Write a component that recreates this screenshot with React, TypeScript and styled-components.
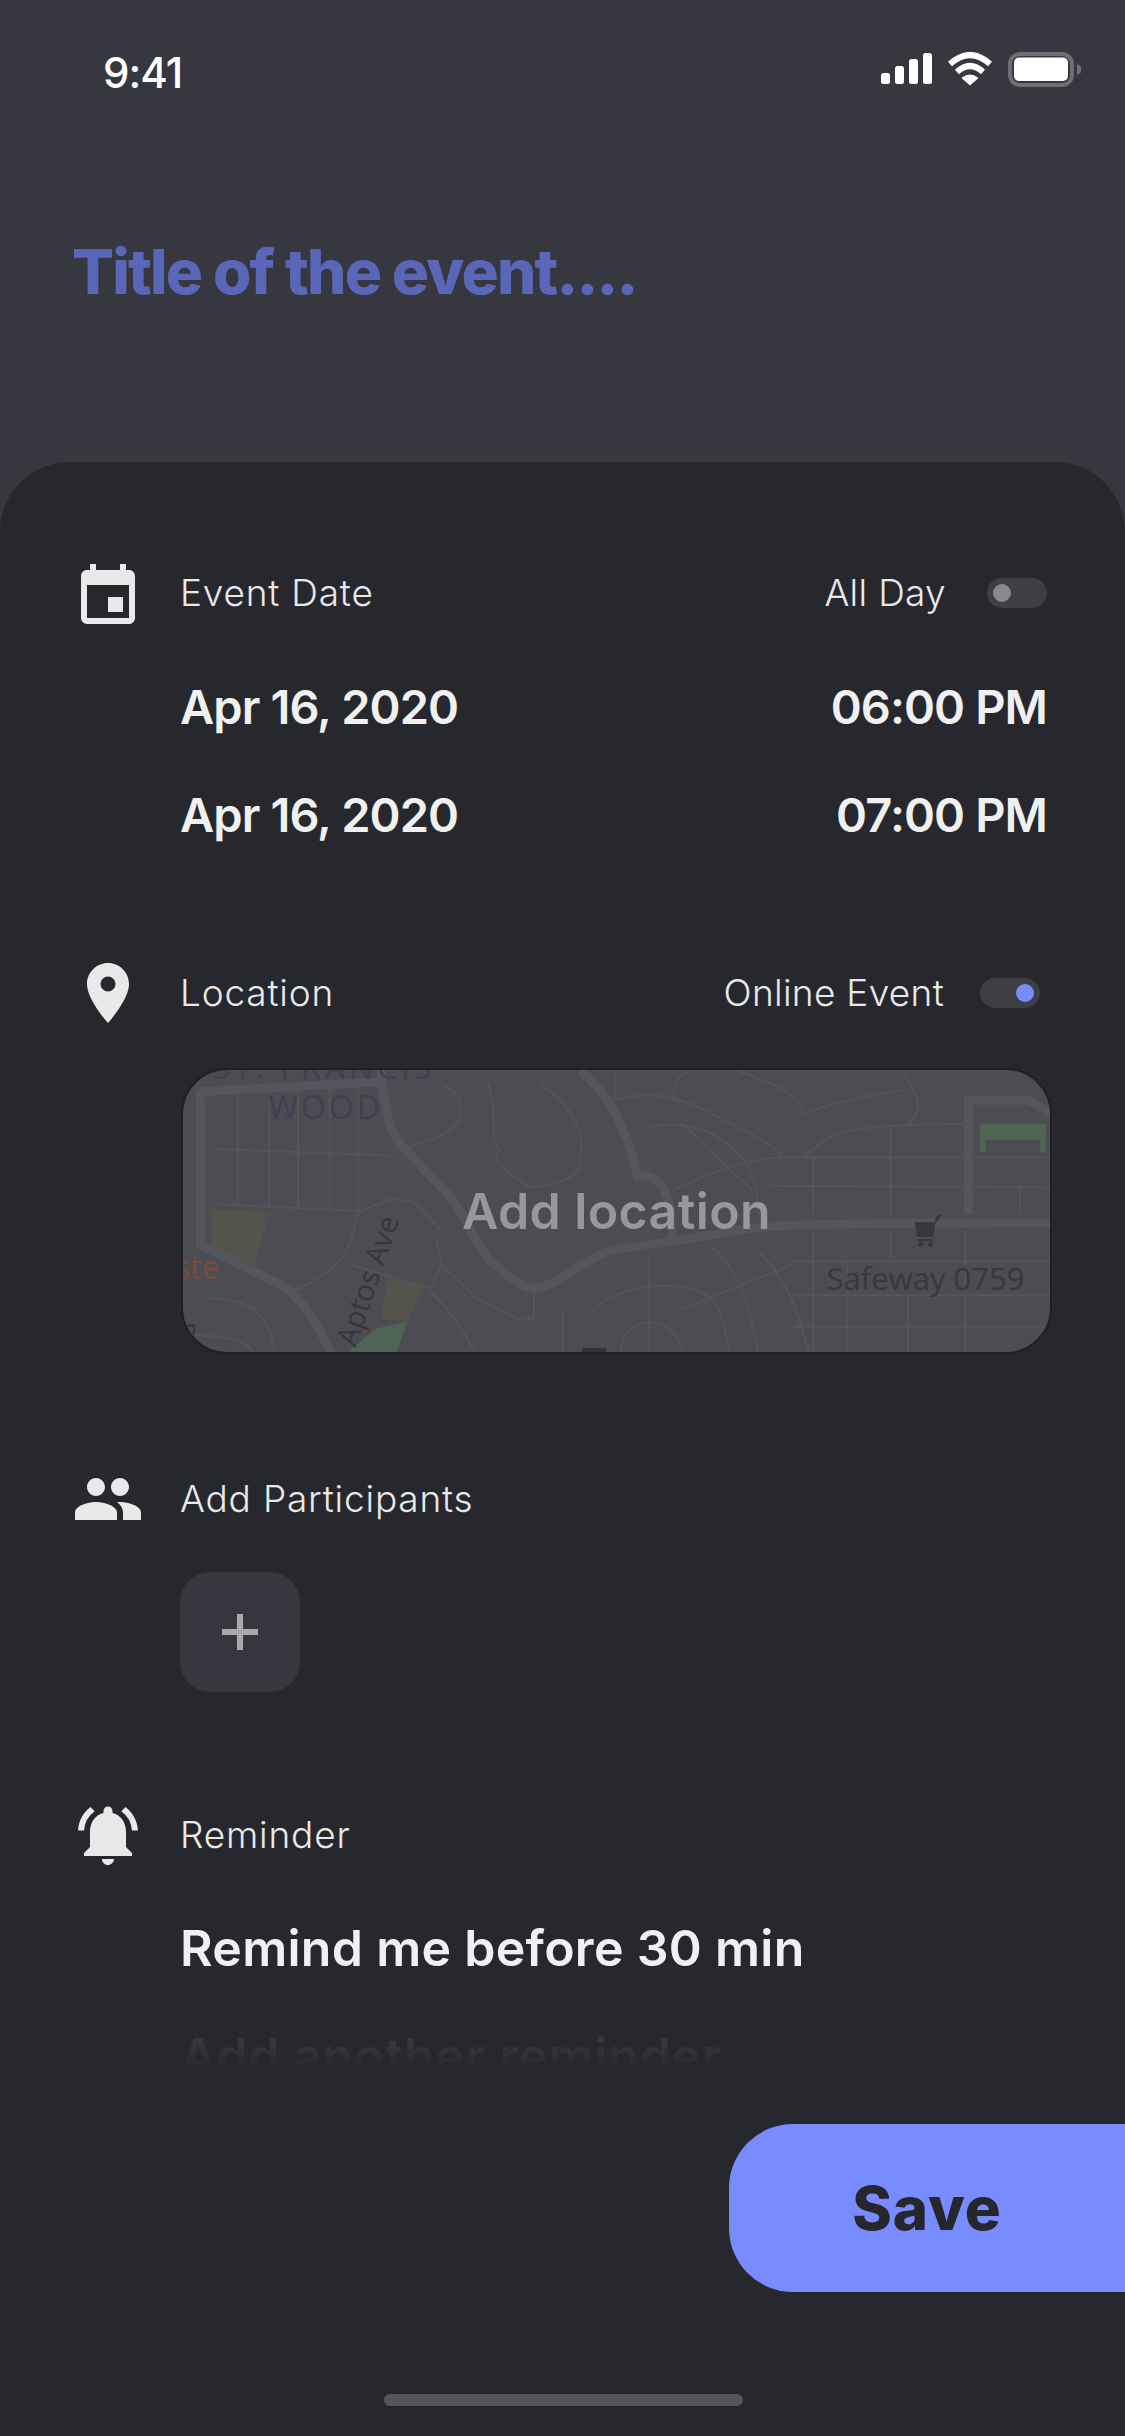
import React from 'react';
import styled, { createGlobalStyle } from 'styled-components';
import { MdEvent, MdPlace, MdPeople, MdNotificationsActive } from 'react-icons/md';

const GlobalStyle = createGlobalStyle`
  html, body {
    margin: 0;
    padding: 0;
    background: #373740;
  }
`;

const Screen = styled.div`
  position: relative;
  display: flex;
  flex-direction: column;
  width: 1125px;
  height: 2436px;
  overflow: hidden;
  background: #373740;
  font-family: Inter, "Liberation Sans", sans-serif;
  color: #e9e9e9;
`;

const Header = styled.header`
  height: 462px;
  flex-shrink: 0;
`;

const StatusBar = styled.div`
  display: flex;
  justify-content: space-between;
  align-items: center;
  height: 40px;
  padding: 52px 44px 0 103px;
`;

const Clock = styled.span`
  font-size: 42px;
  font-weight: 500;
  letter-spacing: -1px;
  color: #fff;
`;

const StatusIconSet = styled.svg`
  margin-top: -4px;
`;

const Title = styled.h1`
  margin: 144px 0 0 72px;
  font-size: 62px;
  line-height: 72px;
  font-weight: 800;
  letter-spacing: -1.8px;
  color: #5a67b8;
`;

const Sheet = styled.main`
  flex: 1;
  padding: 100px 78px 0 72px;
  border-radius: 70px 70px 0 0;
  background: #27282d;
`;

const Row = styled.div<{ $top?: number }>`
  display: flex;
  align-items: center;
  height: 62px;
  margin-top: ${(p) => p.$top ?? 0}px;
`;

const IconSlot = styled.div<{ $drop?: number }>`
  display: flex;
  justify-content: center;
  align-items: center;
  width: 72px;
  margin-right: 36px;
  padding-top: ${(p) => p.$drop ?? 0}px;
  font-size: 72px;
  color: #e9e9e9;
`;

const Label = styled.span`
  padding-bottom: 2px;
  font-size: 37px;
  font-weight: 300;
  letter-spacing: 0.8px;
`;

const Side = styled.div`
  display: flex;
  align-items: center;
  margin-left: auto;
`;

const SideLabel = styled(Label)<{ $on?: boolean }>`
  margin-right: ${(p) => (p.$on ? 36 : 41)}px;
  letter-spacing: 0.3px;
`;

const Toggle = styled.div<{ $on?: boolean }>`
  display: flex;
  align-items: center;
  justify-content: ${(p) => (p.$on ? 'flex-end' : 'flex-start')};
  width: 60px;
  height: 30px;
  padding: 0 6px;
  box-sizing: border-box;
  margin-right: ${(p) => (p.$on ? 7 : 0)}px;
  border-radius: 15px;
  background: #3e3f45;

  &::after {
    content: '';
    width: 18px;
    height: 18px;
    border-radius: 50%;
    background: ${(p) => (p.$on ? '#788bff' : '#8a8a8a')};
  }
`;

const ValueRow = styled.div<{ $top?: number; $text?: boolean }>`
  display: flex;
  justify-content: space-between;
  align-items: center;
  height: 108px;
  margin-left: 108px;
  margin-top: ${(p) => p.$top ?? 0}px;
  font-size: ${(p) => (p.$text ? 50 : 47)}px;
  font-weight: 600;
  letter-spacing: ${(p) => (p.$text ? 0.3 : -0.9)}px;
  color: #f0f0f0;
`;

const FadedValue = styled.span`
  letter-spacing: 0.7px;
  color: transparent;
  background: linear-gradient(to bottom, #37383d 25%, #27282d 72%);
  -webkit-background-clip: text;
  background-clip: text;
`;

const MapCard = styled.div`
  position: relative;
  display: flex;
  justify-content: center;
  align-items: center;
  height: 282px;
  margin: 44px -5px 0 109px;
  border: 2px solid #1f2024;
  border-radius: 46px;
  overflow: hidden;
  background: #4c4c52;
`;

const MapArt = styled.svg`
  position: absolute;
  inset: 0;
  width: 100%;
  height: 100%;
`;

const MapLabel = styled.span`
  position: relative;
  font-size: 50px;
  font-weight: 600;
  letter-spacing: 0.4px;
  color: #98989c;
`;

const AddButton = styled.button`
  display: flex;
  justify-content: center;
  align-items: center;
  width: 120px;
  height: 120px;
  margin: 42px 0 0 108px;
  padding: 0;
  border: 0;
  border-radius: 30px;
  background: #373740;
`;

const SaveButton = styled.button`
  position: absolute;
  right: 0;
  bottom: 144px;
  width: 396px;
  height: 168px;
  padding: 0;
  border: 0;
  border-radius: 64px 0 0 64px;
  background: #788bff;
  font-family: Inter, "Liberation Sans", sans-serif;
  font-size: 60px;
  font-weight: 800;
  letter-spacing: 1px;
  color: #26272c;
`;

const HomeBar = styled.div`
  position: absolute;
  left: 384px;
  bottom: 30px;
  width: 359px;
  height: 12px;
  border-radius: 6px;
  background: #545459;
`;

const StatusIcons = () => (
  <StatusIconSet width="200" height="36" viewBox="0 0 200 36">
    <rect x="0" y="21" width="9" height="11" rx="2.5" fill="#fff" />
    <rect x="14" y="14" width="9" height="18" rx="2.5" fill="#fff" />
    <rect x="28" y="7" width="9" height="25" rx="2.5" fill="#fff" />
    <rect x="42" y="1" width="9" height="31" rx="2.5" fill="#fff" />
    <path d="M69 12 Q89 -6 109 12" fill="none" stroke="#fff" strokeWidth="6" />
    <path d="M76 20 Q89 8 102 20" fill="none" stroke="#fff" strokeWidth="6" />
    <path d="M81 26 Q89 20 97 26 L89 33 Z" fill="#fff" stroke="#fff" strokeWidth="1" strokeLinejoin="round" />
    <rect x="129" y="2" width="62" height="31" rx="10" fill="none" stroke="#6e6e76" strokeWidth="4" />
    <rect x="133" y="5.5" width="54" height="23.5" rx="5" fill="#fff" />
    <path d="M196 12 q4.5 1.5 4.5 5.5 t-4.5 5.5 z" fill="#6e6e76" />
  </StatusIconSet>
);

// traced in a 1.74 x 3 stretched crop of the map, hence the odd scale on the group below
const mainRoads = [
  'M70 120 V590 M70 125 L280 105 L385 95',
  'M70 580 L210 700 C250 740 280 840 300 910',
  'M385 60 C390 180 400 250 420 285 L500 430 C530 480 540 560 570 620 C600 670 630 710 650 710 C700 700 720 640 780 600 C840 580 900 570 980 545 C1040 525 1080 515 1550 515',
  'M730 60 C780 130 810 230 830 375 C870 370 890 420 890 560',
  'M1405 490 V150 H1510 L1550 190',
];

const minorRoads = [
  'M95 295 L400 315',
  'M95 460 L350 480 L400 445 L440 450 L490 540',
  'M135 125 V465 M190 120 V470 M240 115 V470 M295 110 V475 M345 105 V480',
  'M490 100 C510 130 530 130 520 210 C500 260 450 280 430 290',
  'M570 100 C590 200 570 270 590 300 C570 350 620 370 640 410',
  'M660 100 C720 170 740 250 730 320 C740 370 700 400 640 410',
  'M790 150 C850 120 900 140 950 180 C1000 240 1060 260 1080 320 C1000 330 940 380 890 420',
  'M850 230 C900 210 960 230 1000 300 C1020 330 1040 380 1040 500',
  'M910 220 C950 300 990 350 1030 420',
  'M790 60 V150 M920 60 C880 110 900 110 890 150',
  'M1000 60 C1080 110 1100 120 1120 190 C1180 150 1250 130 1290 120',
  'M1120 320 C1170 240 1180 225 1400 220',
  'M1290 60 C1300 100 1340 170 1300 220',
  'M1080 320 H1550 M1060 405 L1550 410',
  'M1135 320 V490 M1270 225 V490 M1495 410 V490',
  'M1135 540 V910 M1195 630 V910 M1270 540 V620 M1400 540 V910 M1300 730 V910',
  'M1100 630 H1550 M1100 730 H1550 M1100 825 H1550',
  'M850 620 V910',
  'M650 720 V800 L620 800 L550 740 L490 640 L480 560',
  'M750 780 C780 720 850 690 920 710 C970 720 980 800 990 910',
  'M800 910 C800 780 900 780 910 910',
  'M910 770 L1100 640',
  'M1040 600 C1100 700 1110 800 1130 910',
  'M960 590 C1010 650 1030 800 1040 910',
  'M700 780 V910',
  'M470 720 C520 800 540 880 550 910',
  'M80 740 C150 740 190 770 200 910',
  'M60 850 C130 850 160 880 165 910',
  'M230 720 C320 650 330 600 345 480',
  'M330 640 L470 710 L490 640',
  'M160 640 L190 480',
];

const MapDrawing = () => (
  <MapArt viewBox="0 0 865 280" preserveAspectRatio="none">
    <g transform="translate(-23 -20) scale(0.574 0.3333)">
      <path d="M90 475 L185 480 L165 650 L90 590 Z" fill="#54544b" />
      <path d="M395 680 L458 705 L430 810 L385 800 Z" fill="#54544b" />
      <path d="M320 910 L375 830 L430 810 L410 910 Z" fill="#4d6552" />
      <path d="M1425 305 V220 H1540 V305 H1530 V268 H1435 V305 Z" fill="#4e6552" />
      <g fill="none" stroke="#54545b" strokeWidth="2">
        {minorRoads.map((d) => (
          <path key={d} d={d} vectorEffect="non-scaling-stroke" />
        ))}
      </g>
      <g fill="none" stroke="#54555d" strokeWidth="9">
        {mainRoads.map((d) => (
          <path key={d} d={d} vectorEffect="non-scaling-stroke" />
        ))}
      </g>
    </g>
    <g fontFamily="'Open Sans', sans-serif">
      <text x="29" y="9" fontSize="32" letterSpacing="4" fill="#3d4152">ST. FRANCIS</text>
      <text x="85" y="49" fontSize="32" letterSpacing="3" fill="#3d4152">WOOD</text>
      <text x="-8" y="208" fontSize="32" fill="#7a4a3c">ste</text>
      <text transform="translate(172 276) rotate(-71)" fontSize="29" fill="#36373e">Aptos Ave</text>
      <text x="642" y="218" fontSize="31" fill="#38383d">Safeway 0759</text>
      <text transform="translate(-8 250) rotate(90)" fontSize="28" fill="#36373e">R</text>
    </g>
    <path d="M731 152 H750 L748 165 H733 Z M750 153 L752 146 L757 144" fill="#38373b" stroke="#38373b" strokeWidth="1.5" />
    <rect x="733" y="168" width="16" height="2" fill="#38373b" />
    <circle cx="736" cy="173" r="2.5" fill="#38373b" />
    <circle cx="746" cy="173" r="2.5" fill="#38373b" />
    <rect x="398" y="276" width="24" height="5" fill="#333338" />
  </MapArt>
);

const App: React.FC = () => (
  <Screen>
    <GlobalStyle />
    <Header>
      <StatusBar>
        <Clock>9:41</Clock>
        <StatusIcons />
      </StatusBar>
      <Title>Title of the event....</Title>
    </Header>
    <Sheet>
      <Row>
        <IconSlot $drop={8}><MdEvent /></IconSlot>
        <Label>Event Date</Label>
        <Side>
          <SideLabel>All Day</SideLabel>
          <Toggle />
        </Side>
      </Row>
      <ValueRow $top={28}>
        <span>Apr 16, 2020</span>
        <span>06:00 PM</span>
      </ValueRow>
      <ValueRow>
        <span>Apr 16, 2020</span>
        <span>07:00 PM</span>
      </ValueRow>

      <Row $top={94}>
        <IconSlot><MdPlace /></IconSlot>
        <Label>Location</Label>
        <Side>
          <SideLabel $on>Online Event</SideLabel>
          <Toggle $on />
        </Side>
      </Row>
      <MapCard>
        <MapDrawing />
        <MapLabel>Add location</MapLabel>
      </MapCard>

      <Row $top={114}>
        <IconSlot><MdPeople /></IconSlot>
        <Label>Add Participants</Label>
      </Row>
      <AddButton aria-label="Add participant">
        <svg width="36" height="36" viewBox="0 0 36 36">
          <path d="M18 0 V36 M0 18 H36" stroke="#a9a9b0" strokeWidth="6" />
        </svg>
      </AddButton>

      <Row $top={112}>
        <IconSlot><MdNotificationsActive /></IconSlot>
        <Label>Reminder</Label>
      </Row>
      <ValueRow $top={28} $text>
        <span>Remind me before 30 min</span>
      </ValueRow>
      <ValueRow $text>
        <FadedValue>Add another reminder</FadedValue>
      </ValueRow>
    </Sheet>
    <SaveButton>Save</SaveButton>
    <HomeBar />
  </Screen>
);

export default App;
